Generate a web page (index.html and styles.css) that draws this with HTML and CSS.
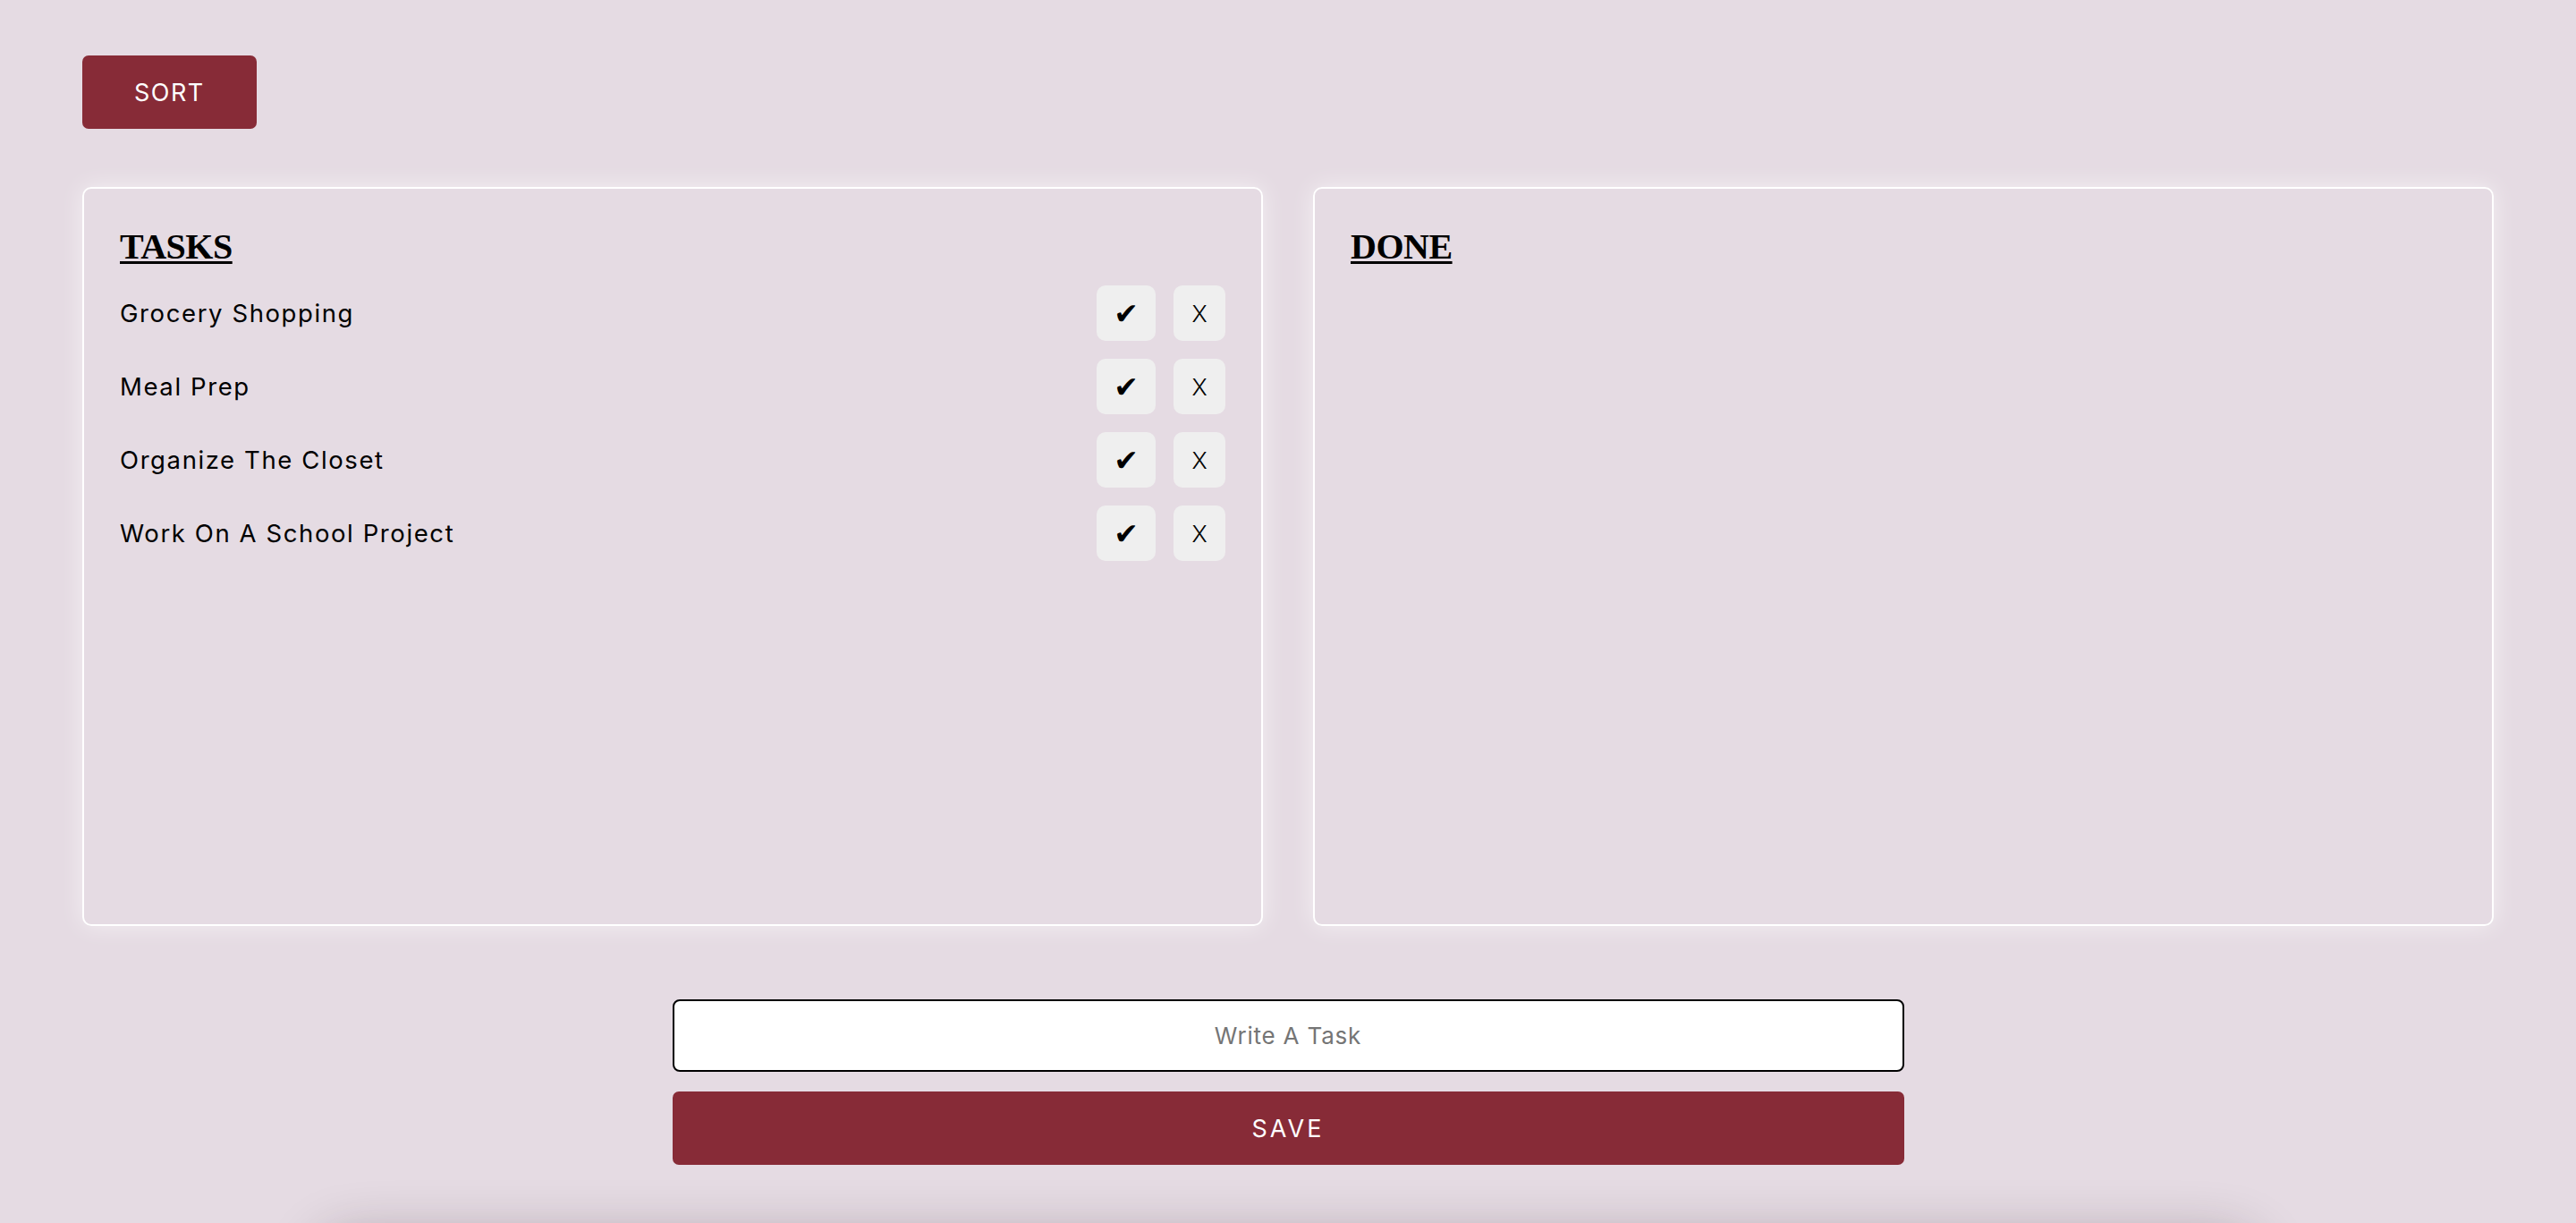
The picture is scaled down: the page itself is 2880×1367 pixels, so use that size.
FILE: index.html
```html
<!DOCTYPE html>
<html lang="en">
<head>
<meta charset="utf-8">
<title>Tasks</title>
<link rel="stylesheet" href="styles.css">
</head>
<body>
  <main class="app">
    <div class="toolbar">
      <button class="btn-primary btn-sort" type="button">SORT</button>
    </div>

    <div class="boards">
      <section class="board">
        <h2 class="board-title">TASKS</h2>
        <ul class="task-list">
          <li class="task">
            <span class="task-name">Grocery Shopping</span>
            <span class="task-actions">
              <button class="task-btn task-done" type="button">✔</button>
              <button class="task-btn task-remove" type="button">X</button>
            </span>
          </li>
          <li class="task">
            <span class="task-name">Meal Prep</span>
            <span class="task-actions">
              <button class="task-btn task-done" type="button">✔</button>
              <button class="task-btn task-remove" type="button">X</button>
            </span>
          </li>
          <li class="task">
            <span class="task-name">Organize The Closet</span>
            <span class="task-actions">
              <button class="task-btn task-done" type="button">✔</button>
              <button class="task-btn task-remove" type="button">X</button>
            </span>
          </li>
          <li class="task">
            <span class="task-name">Work On A School Project</span>
            <span class="task-actions">
              <button class="task-btn task-done" type="button">✔</button>
              <button class="task-btn task-remove" type="button">X</button>
            </span>
          </li>
        </ul>
      </section>

      <section class="board">
        <h2 class="board-title">DONE</h2>
        <ul class="task-list"></ul>
      </section>
    </div>

    <form class="new-task">
      <input class="task-input" type="text" placeholder="Write A Task">
      <button class="btn-primary btn-save" type="button">SAVE</button>
    </form>

    <section class="archive"></section>
  </main>
</body>
</html>
```

FILE: styles.css
```css
html, body {
  margin: 0;
  height: 100%;
  overflow: hidden;
}

body {
  background: #e5dbe3;
  font-family: Inter, "Noto Sans", "Liberation Sans", sans-serif;
  color: #000;
}

.app {
  padding: 62px 92px 0;
}

.toolbar {
  display: flex;
}

.btn-primary {
  background: #872b37;
  color: #fff;
  border: none;
  border-radius: 7px;
  font-family: Inter, "Noto Sans", sans-serif;
  font-size: 27px;
  font-weight: 400;
  letter-spacing: 1.5px;
  cursor: pointer;
}

.btn-sort {
  height: 82px;
  padding: 0 58px;
}

.boards {
  display: grid;
  grid-template-columns: 1fr 1fr;
  gap: 56px;
  margin-top: 65px;
}

.board {
  height: 826px;
  box-sizing: border-box;
  border: 2px solid #fff;
  border-radius: 10px;
  box-shadow: 0 0 26px rgba(255, 255, 255, 0.6);
  padding: 41px 40px 0 40px;
}

.board-title {
  margin: 0;
  font-family: "Liberation Serif", "Times New Roman", serif;
  font-weight: 700;
  font-size: 40px;
  line-height: 48px;
  letter-spacing: -0.5px;
  text-decoration: underline;
  text-decoration-thickness: 3px;
  text-underline-offset: 3px;
}

.task-list {
  list-style: none;
  margin: 19px 0 0;
  padding: 0;
  display: flex;
  flex-direction: column;
  gap: 20px;
}

.task {
  display: flex;
  align-items: center;
  justify-content: space-between;
  height: 62px;
}

.task-name {
  font-size: 27.5px;
  letter-spacing: 1.6px;
}

.task-actions {
  display: flex;
  gap: 20px;
}

.task-btn {
  height: 62px;
  border: none;
  border-radius: 10px;
  background: #efefef;
  color: #000;
  cursor: pointer;
  padding: 0;
}

.task-done {
  width: 66px;
  font-family: "DejaVu Sans", sans-serif;
  font-size: 33px;
}

.task-remove {
  width: 58px;
  font-family: Inter, sans-serif;
  font-size: 26px;
  font-weight: 300;
}

.new-task {
  width: 1377px;
  margin: 82px auto 0;
  display: flex;
  flex-direction: column;
  gap: 22px;
}

.task-input {
  height: 81px;
  box-sizing: border-box;
  border: 2px solid #000;
  border-radius: 8px;
  background: #fff;
  font-family: Inter, sans-serif;
  font-size: 26px;
  letter-spacing: 0.8px;
  text-align: center;
  color: #000;
  outline: none;
}

.task-input::placeholder {
  color: #757575;
}

.btn-save {
  height: 82px;
  width: 100%;
  letter-spacing: 3px;
}

.archive {
  width: 2170px;
  height: 400px;
  margin: 80px auto 0;
  border-radius: 40px;
  background: #e5dbe3;
  box-shadow: 0 0 60px rgba(40, 20, 30, 0.3);
}
```
